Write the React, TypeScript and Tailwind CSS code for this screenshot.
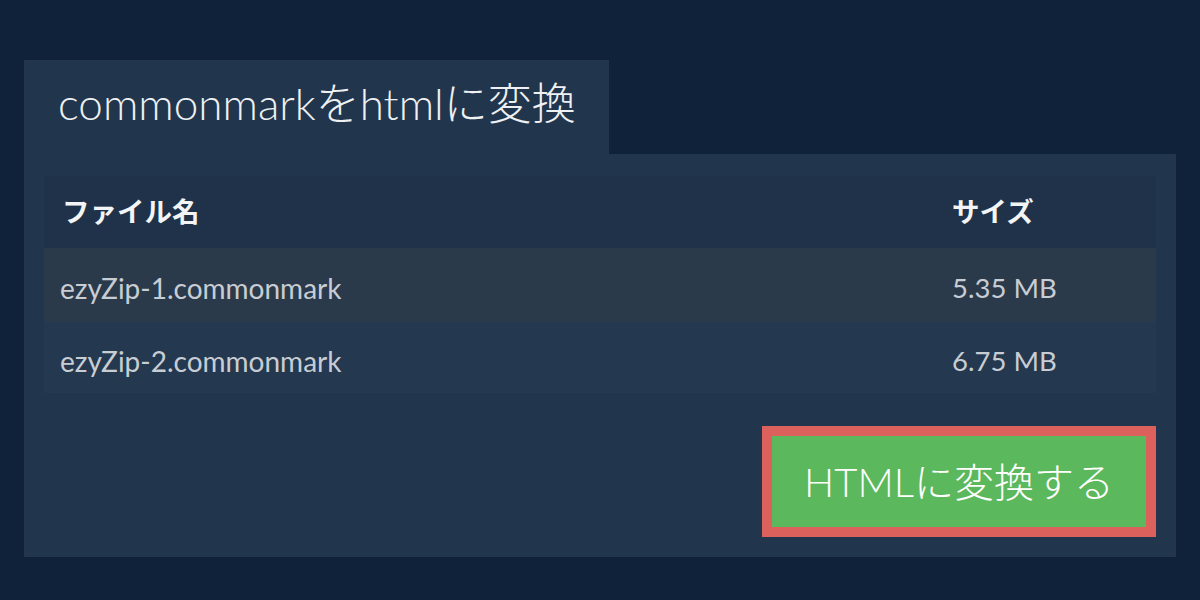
const FONT = "font-['Lato','Noto_Sans_CJK_JP',sans-serif]";

const FILES = [
  { name: "ezyZip-1.commonmark", size: "5.35 MB" },
  { name: "ezyZip-2.commonmark", size: "6.75 MB" },
];

export default function App() {
  return (
    <div className={`${FONT} h-[600px] w-[1200px] bg-[#10223a] px-6 pt-[60px]`}>
      {/* tab title */}
      <div className="flex h-[94px] w-[585px] items-center bg-[#21354d] pl-[34px] pb-[8px]">
        <h1 className="text-[44px] font-light leading-none text-[#eef0f2]">commonmarkをhtmlに変換</h1>
      </div>

      {/* panel */}
      <div className="flex h-[403px] flex-col bg-[#21354d] px-5 pt-[22px]">
        <div className="flex flex-col">
          <div className="flex h-[72px] items-center bg-[#1f3249] pl-[18px] text-[27.5px] font-bold text-[#f3f4f5]">
            <span className="w-[890px]">ファイル名</span>
            <span>サイズ</span>
          </div>
          {FILES.map((f, i) => (
            <div
              key={f.name}
              className={`flex items-center pl-[16px] pt-[6px] text-[#c8cdd3] ${
                i === 0 ? "h-[74px] bg-[#2b3a4b]" : "h-[71px] bg-[#243850]"
              }`}
            >
              <span className="w-[892px] text-[28px]">{f.name}</span>
              <span className="text-[27.5px]">{f.size}</span>
            </div>
          ))}
        </div>

        <div className="mt-[33px] flex justify-end">
          <button className="flex h-[111px] w-[394px] items-center justify-center border-[10px] border-[#dc605c] bg-[#5cb85c] text-[40px] font-light text-white">
            HTMLに変換する
          </button>
        </div>
      </div>
    </div>
  );
}
